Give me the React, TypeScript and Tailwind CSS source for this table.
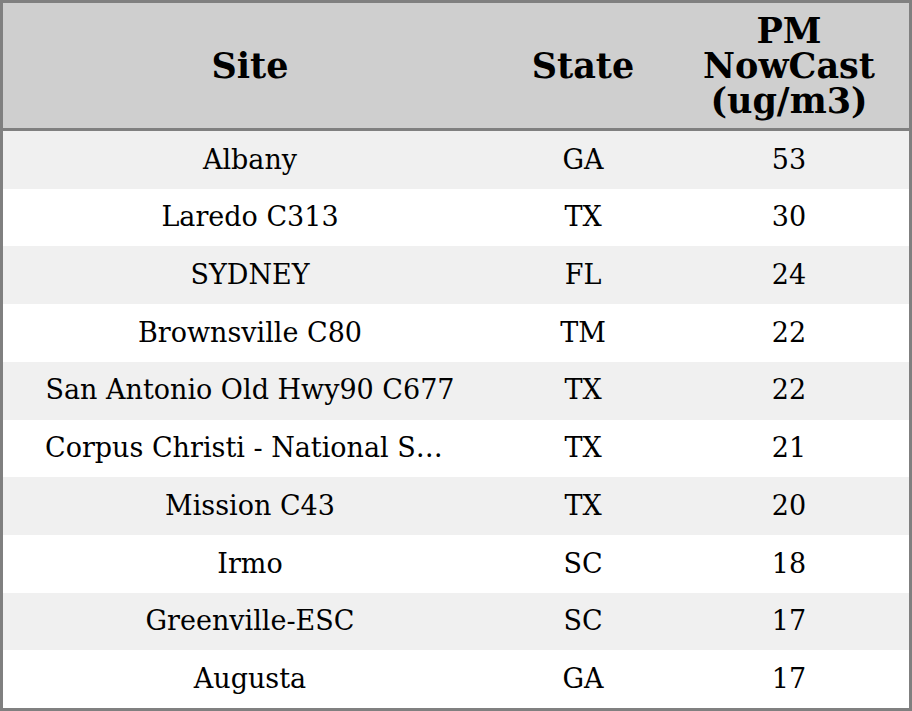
const rows = [
  { site: 'Albany', state: 'GA', pm: 53 },
  { site: 'Laredo C313', state: 'TX', pm: 30 },
  { site: 'SYDNEY', state: 'FL', pm: 24 },
  { site: 'Brownsville C80', state: 'TM', pm: 22 },
  { site: 'San Antonio Old Hwy90 C677', state: 'TX', pm: 22 },
  { site: 'Corpus Christi - National Seashore', state: 'TX', pm: 21 },
  { site: 'Mission C43', state: 'TX', pm: 20 },
  { site: 'Irmo', state: 'SC', pm: 18 },
  { site: 'Greenville-ESC', state: 'SC', pm: 17 },
  { site: 'Augusta', state: 'GA', pm: 17 },
]

export default function App() {
  return (
    <div className="w-[912px] h-[711px] flex flex-col border-[3px] border-[#808080] bg-white text-black font-['DejaVu_Serif',serif]">
      <div className="grid grid-cols-[494px_172px_240px] h-[128px] shrink-0 bg-[#cfcfcf] border-b-[3px] border-[#808080] font-bold text-[35px] leading-[35px]">
        <div className="flex items-center justify-center">Site</div>
        <div className="flex items-center justify-center">State</div>
        <div className="flex items-center justify-center text-center">
          PM
          <br />
          NowCast
          <br />
          (ug/m3)
        </div>
      </div>
      <div className="flex-1 flex flex-col text-[27px]">
        {rows.map((r, i) => (
          <div
            key={r.site}
            className={`flex-1 grid grid-cols-[494px_172px_240px] items-center ${i % 2 === 0 ? 'bg-[#f0f0f0]' : 'bg-white'}`}
          >
            <div className="px-[42px] text-center truncate">{r.site}</div>
            <div className="text-center">{r.state}</div>
            <div className="text-center">{r.pm}</div>
          </div>
        ))}
      </div>
    </div>
  )
}
